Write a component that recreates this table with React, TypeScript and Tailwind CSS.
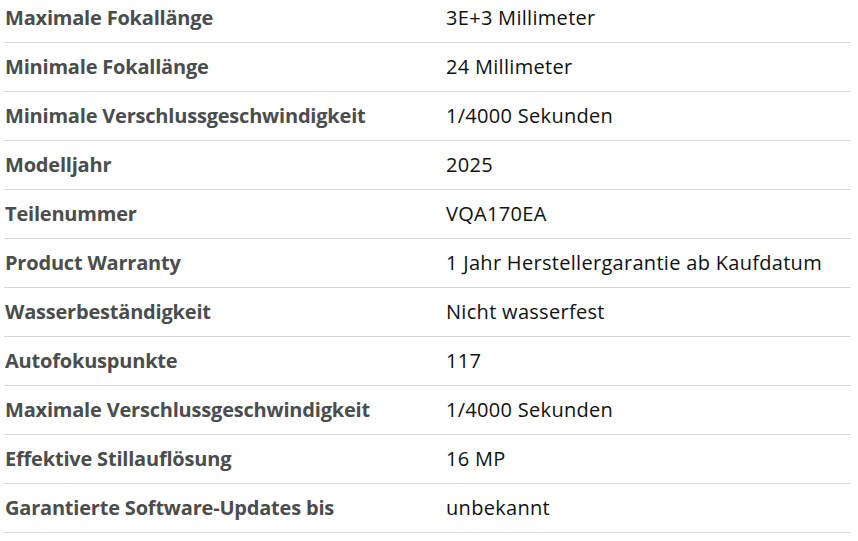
const ROWS: [string, string][] = [
  ["Maximale Fokallänge", "3E+3 Millimeter"],
  ["Minimale Fokallänge", "24 Millimeter"],
  ["Minimale Verschlussgeschwindigkeit", "1/4000 Sekunden"],
  ["Modelljahr", "2025"],
  ["Teilenummer", "VQA170EA"],
  ["Product Warranty", "1 Jahr Herstellergarantie ab Kaufdatum"],
  ["Wasserbeständigkeit", "Nicht wasserfest"],
  ["Autofokuspunkte", "117"],
  ["Maximale Verschlussgeschwindigkeit", "1/4000 Sekunden"],
  ["Effektive Stillauflösung", "16 MP"],
  ["Garantierte Software-Updates bis", "unbekannt"],
];

export default function App() {
  return (
    <div className="h-[541px] w-[858px] overflow-hidden bg-white font-['Open_Sans',sans-serif] text-[20px]">
      <div className="ml-[4px] w-[847px]">
        {ROWS.map(([label, value], i) => (
          <div
            key={label + i}
            className={`grid grid-cols-[442px_1fr] items-center border-b border-[#d5d9d9] ${
              i === 0 ? "h-[43px] pb-[6px]" : "h-[49px]"
            }`}
          >
            <span className="pl-px font-bold tracking-[-0.2px] text-[#4a4d4d]">{label}</span>
            <span className="tracking-[0.3px] text-[#0f1111]">{value}</span>
          </div>
        ))}
      </div>
    </div>
  );
}
